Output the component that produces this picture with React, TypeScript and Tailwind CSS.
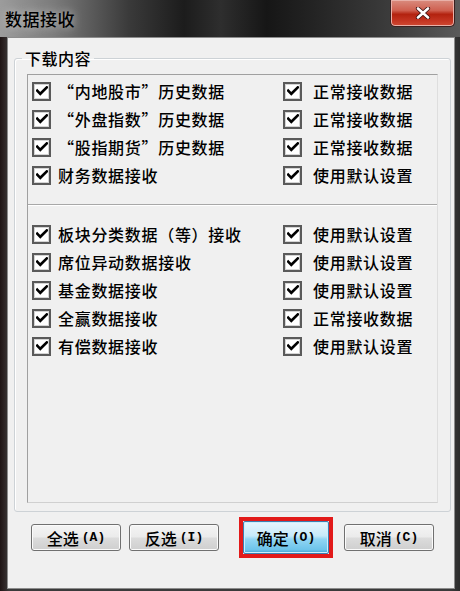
import React from "react";

function Check() {
  return (
    <span className="w-[19px] h-[19px] border-2 border-[#5a5a5a] bg-white flex items-center justify-center shrink-0 shadow-[inset_0_0_0_1px_#d4d4d4]">
      <svg width="12" height="10" viewBox="0 0 12 10">
        <path d="M1.2 4.6 L4.3 7.8 L10.8 1.4" stroke="#000" strokeWidth="2.6" fill="none" strokeLinecap="square" />
      </svg>
    </span>
  );
}

function Row({ left, right }: { left: string; right: string }) {
  return (
    <div className="grid grid-cols-[251px_1fr] h-[28px] items-center">
      <div className="flex items-center gap-[7px]">
        <Check />
        <span className="leading-none">{left}</span>
      </div>
      <div className="flex items-center gap-[11px]">
        <Check />
        <span className="leading-none">{right}</span>
      </div>
    </div>
  );
}

function BtnLabel({ cjk, k }: { cjk: string; k: string }) {
  return (
    <span className="flex items-center text-black">
      <span className="text-[16px] leading-none font-medium">{cjk}</span>
      <span className="ml-[3px] text-[13px] leading-none [font-family:'Liberation_Mono',monospace] font-bold">({k})</span>
    </span>
  );
}

function Btn({ cjk, k }: { cjk: string; k: string }) {
  return (
    <div className="h-[27px] w-[90px] rounded-[3px] border border-[#707070] bg-[linear-gradient(#f4f4f4_0%,#ebebeb_48%,#dcdcdc_52%,#cfcfcf_100%)] shadow-[inset_0_0_0_1px_#fbfbfb] flex items-center justify-center">
      <BtnLabel cjk={cjk} k={k} />
    </div>
  );
}

export default function App() {
  return (
    <div className="w-[460px] h-[591px] overflow-hidden flex flex-col bg-[linear-gradient(90deg,#1e1414_0%,#2e2626_1%,#3a3a3a_2%,#3a3a3a_98%,#2c2c2c_100%)] [font-family:'Noto_Sans_CJK_SC',sans-serif]">
      {/* title bar */}
      <div className="h-[37px] shrink-0 flex items-start justify-between bg-[linear-gradient(90deg,#9c9c9c_0%,#7a7a7a_12%,#3a3a3a_28%,#1c1c1c_40%,#2e2e2e_48%,#161616_58%,#262626_70%,#3c3c3c_85%,#5a5a5a_100%)]">
        <span className="mt-[9px] ml-[5px] text-[17px] leading-[20px] text-black font-medium tracking-[0.5px] [text-shadow:0_0_8px_#c8c8c8]">
          数据接收
        </span>
        <div className="mr-[5px] w-[65px] h-[27px] rounded-b-[5px] border border-[#3a2020] border-t-0 shadow-[inset_0_0_0_1px_#e8b0a8] bg-[linear-gradient(#d98c7f_0%,#cf6050_40%,#b3220f_55%,#c43522_80%,#d04a33_100%)] flex items-center justify-center">
          <svg width="16" height="12" viewBox="0 0 16 12">
            <path d="M3 1.5 L13 10.5 M13 1.5 L3 10.5" stroke="#3a1010" strokeWidth="4.2" strokeLinecap="round" />
            <path d="M3 1.5 L13 10.5 M13 1.5 L3 10.5" stroke="#ffffff" strokeWidth="2.6" strokeLinecap="round" />
          </svg>
        </div>
      </div>

      {/* client area */}
      <div className="ml-[7px] mr-[5px] mb-[2px] flex-1 bg-[#f0f0f0] border border-[#8c8c8c] flex flex-col pt-[11px]">
        <fieldset className="ml-[6px] mr-[3px] border border-[#cdd2d6] rounded-[3px] pl-[12px] pr-[12px] pt-[7px] pb-[8px] shadow-[inset_1px_1px_0_#ffffff]">
          <legend className="-ml-[5px] px-[3px] text-[16px] leading-[18px] text-black font-medium tracking-[0.5px]">下载内容</legend>
          <div className="h-[429px] border border-t-[#a0a0a0] border-l-[#a0a0a0] border-r-[#dedede] border-b-[#d0d0d0] bg-[#f0f0f0] pt-[2px] pl-[4px] text-[16px] text-black font-medium tracking-[0.7px]">
            <Row left="“内地股市”历史数据" right="正常接收数据" />
            <Row left="“外盘指数”历史数据" right="正常接收数据" />
            <Row left="“股指期货”历史数据" right="正常接收数据" />
            <Row left="财务数据接收" right="使用默认设置" />
            <div className="mt-[15px] -ml-[4px] border-t border-[#a8a8a8] border-b border-b-white" />
            <div className="mt-[14px]">
              <Row left="板块分类数据（等）接收" right="使用默认设置" />
              <Row left="席位异动数据接收" right="使用默认设置" />
              <Row left="基金数据接收" right="使用默认设置" />
              <Row left="全赢数据接收" right="正常接收数据" />
              <Row left="有偿数据接收" right="使用默认设置" />
            </div>
          </div>
        </fieldset>

        <div className="mt-[5px] h-[41px] flex items-center pl-[23px]">
          <Btn cjk="全选" k="A" />
          <div className="ml-[8px]">
            <Btn cjk="反选" k="I" />
          </div>
          <div className="ml-[20px] w-[94px] h-[41px] border-[4px] border-[#e21a1a] flex">
            <div className="flex-1 rounded-[2px] border border-[#3c7fb1] bg-[linear-gradient(#e8f6fd_0%,#c6eafa_45%,#92d6f4_55%,#6cc3ea_90%,#3e9fd0_100%)] shadow-[inset_0_0_0_1px_#cdeefc] flex items-center justify-center">
              <BtnLabel cjk="确定" k="O" />
            </div>
          </div>
          <div className="ml-[11px]">
            <Btn cjk="取消" k="C" />
          </div>
        </div>
      </div>
    </div>
  );
}
